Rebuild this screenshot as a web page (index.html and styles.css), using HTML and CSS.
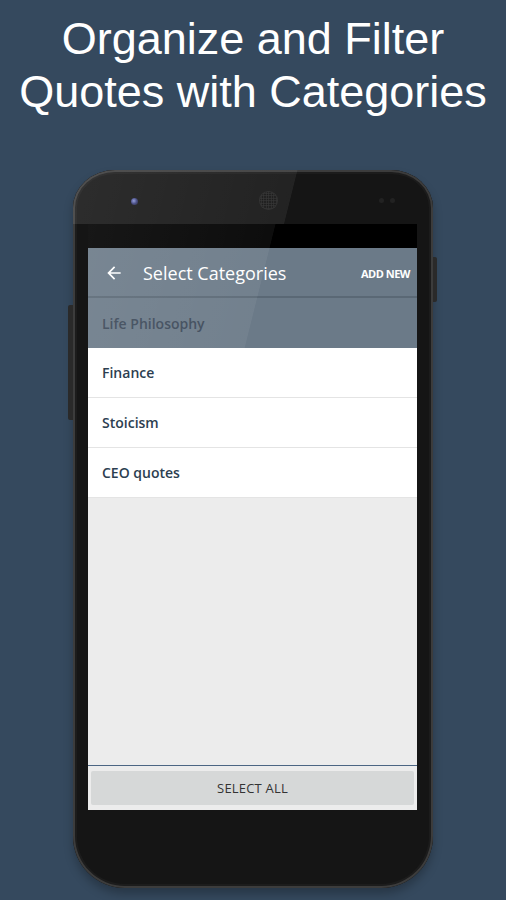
FILE: index.html
```html
<!DOCTYPE html>
<html>
<head>
<meta charset="utf-8">
<link rel="stylesheet" href="styles.css">
</head>
<body>
<div class="page">
  <h1 class="headline">Organize and Filter<br>Quotes with Categories</h1>
  <div class="phone">
    <div class="btn-right"></div>
    <div class="btn-left"></div>
    <div class="bezel-top">
      <span class="camera"></span>
      <span class="speaker"></span>
      <span class="sensors"><i></i><i></i></span>
    </div>
    <div class="screen">
      <div class="statusbar"></div>
      <div class="toolbar">
        <svg class="back" width="20" height="20" viewBox="0 0 24 24"><path d="M20 11H7.83l5.59-5.59L12 4l-8 8 8 8 1.41-1.41L7.83 13H20v-2z" fill="#fff"/></svg>
        <span class="tb-title">Select Categories</span>
        <span class="tb-action">ADD NEW</span>
      </div>
      <div class="row row-selected">Life Philosophy</div>
      <div class="row">Finance</div>
      <div class="row">Stoicism</div>
      <div class="row">CEO quotes</div>
      <div class="empty"></div>
      <div class="footer">
        <div class="select-all">SELECT ALL</div>
      </div>
      <div class="glare"></div>
    </div>
    <div class="bezel-glare"></div>
  </div>
</div>
</body>
</html>
```
FILE: styles.css
```css
html, body {
  margin: 0;
  padding: 0;
  background: #34495e;
}
.page {
  width: 506px;
  height: 900px;
  overflow: hidden;
  background: #35495e;
  display: flex;
  flex-direction: column;
  align-items: center;
}
.headline {
  margin: 12px 0 0;
  font-family: "Liberation Sans", Arial, sans-serif;
  font-weight: 400;
  font-size: 45px;
  line-height: 53px;
  color: #fff;
  text-align: center;
}
.phone {
  position: relative;
  margin-top: 52px;
  width: 360px;
  height: 718px;
  box-sizing: border-box;
  background: #151515;
  border-radius: 42px 42px 52px 52px / 38px 38px 52px 52px;
  box-shadow: inset 0 0 0 2px #3c3c3c, inset 0 0 0 4px #1c1c1c, 0 6px 10px rgba(0,0,0,0.25);
  padding: 0 16px 0 15px;
  display: flex;
  flex-direction: column;
}
.btn-right {
  position: absolute;
  right: -4px;
  top: 87px;
  width: 4px;
  height: 45px;
  background: #2a2a2a;
  border-radius: 0 2px 2px 0;
}
.btn-left {
  position: absolute;
  left: -5px;
  top: 135px;
  width: 5px;
  height: 115px;
  background: #2a2a2a;
  border-radius: 2px 0 0 2px;
}
.bezel-top {
  height: 54px;
  position: relative;
  flex: none;
}
.camera {
  position: absolute;
  left: 43px;
  top: 28px;
  width: 7px;
  height: 7px;
  border-radius: 50%;
  background: radial-gradient(circle at 40% 40%, #8a96d8 0, #3a3f7a 50%, #1a1a2a 100%);
}
.speaker {
  position: absolute;
  left: 172px;
  top: 22px;
  width: 17px;
  height: 17px;
  border-radius: 50%;
  background-image: radial-gradient(circle, #2c2c2c 0.8px, transparent 1px);
  background-size: 2.5px 2.5px;
  background-color: #0e0e0e;
  box-shadow: 0 0 0 1px #262626;
}
.sensors {
  position: absolute;
  left: 291px;
  top: 28px;
  display: flex;
  gap: 6px;
}
.sensors i {
  width: 5px;
  height: 5px;
  border-radius: 50%;
  background: #222;
}
.screen {
  position: relative;
  height: 586px;
  background: #ececec;
  display: flex;
  flex-direction: column;
  overflow: hidden;
  font-family: "Open Sans", "Noto Sans", sans-serif;
}
.statusbar {
  height: 24px;
  background: #000;
  flex: none;
}
.toolbar {
  height: 50px;
  flex: none;
  background: #6b7a88;
  display: flex;
  align-items: center;
  padding: 2px 7px 0 16px;
  box-sizing: border-box;
  border-bottom: 2px solid #5a6875;
}
.back {
  flex: none;
}
.tb-title {
  margin-left: 19px;
  font-size: 18px;
  color: #fff;
  flex: 1;
}
.tb-action {
  font-size: 11px;
  font-weight: 700;
  color: #fff;
  letter-spacing: -0.5px;
}
.row {
  height: 50px;
  flex: none;
  box-sizing: border-box;
  background: #fff;
  border-bottom: 1px solid #e4e4e4;
  display: flex;
  align-items: center;
  padding-left: 14px;
  font-size: 14px;
  font-weight: 600;
  color: #2c3e50;
}
.row-selected {
  background: #6b7a88;
  color: #3b4858;
  border-bottom: none;
}
.empty {
  flex: 1;
  background: #ececec;
  border-bottom: 1px solid #4b6583;
}
.footer {
  height: 44px;
  flex: none;
  background: #ececec;
  padding: 5px 3px 5px 3px;
  box-sizing: border-box;
}
.select-all {
  height: 100%;
  background: #d6d8d8;
  border-radius: 2px;
  display: flex;
  align-items: center;
  justify-content: center;
  font-size: 13px;
  color: #333;
  letter-spacing: 0.2px;
}
.glare {
  position: absolute;
  left: 0;
  top: 0;
  width: 100%;
  height: 124px;
  background: linear-gradient(104deg, rgba(255,255,255,0.09) 0, rgba(255,255,255,0.05) 52%, rgba(255,255,255,0) 52.2%);
  pointer-events: none;
}
.bezel-glare {
  position: absolute;
  left: 0;
  top: 0;
  width: 100%;
  height: 54px;
  border-radius: 42px 42px 0 0 / 38px 38px 0 0;
  background: linear-gradient(104deg, rgba(255,255,255,0.1) 0, rgba(255,255,255,0.06) 60%, rgba(255,255,255,0) 60.2%);
  pointer-events: none;
}
```
